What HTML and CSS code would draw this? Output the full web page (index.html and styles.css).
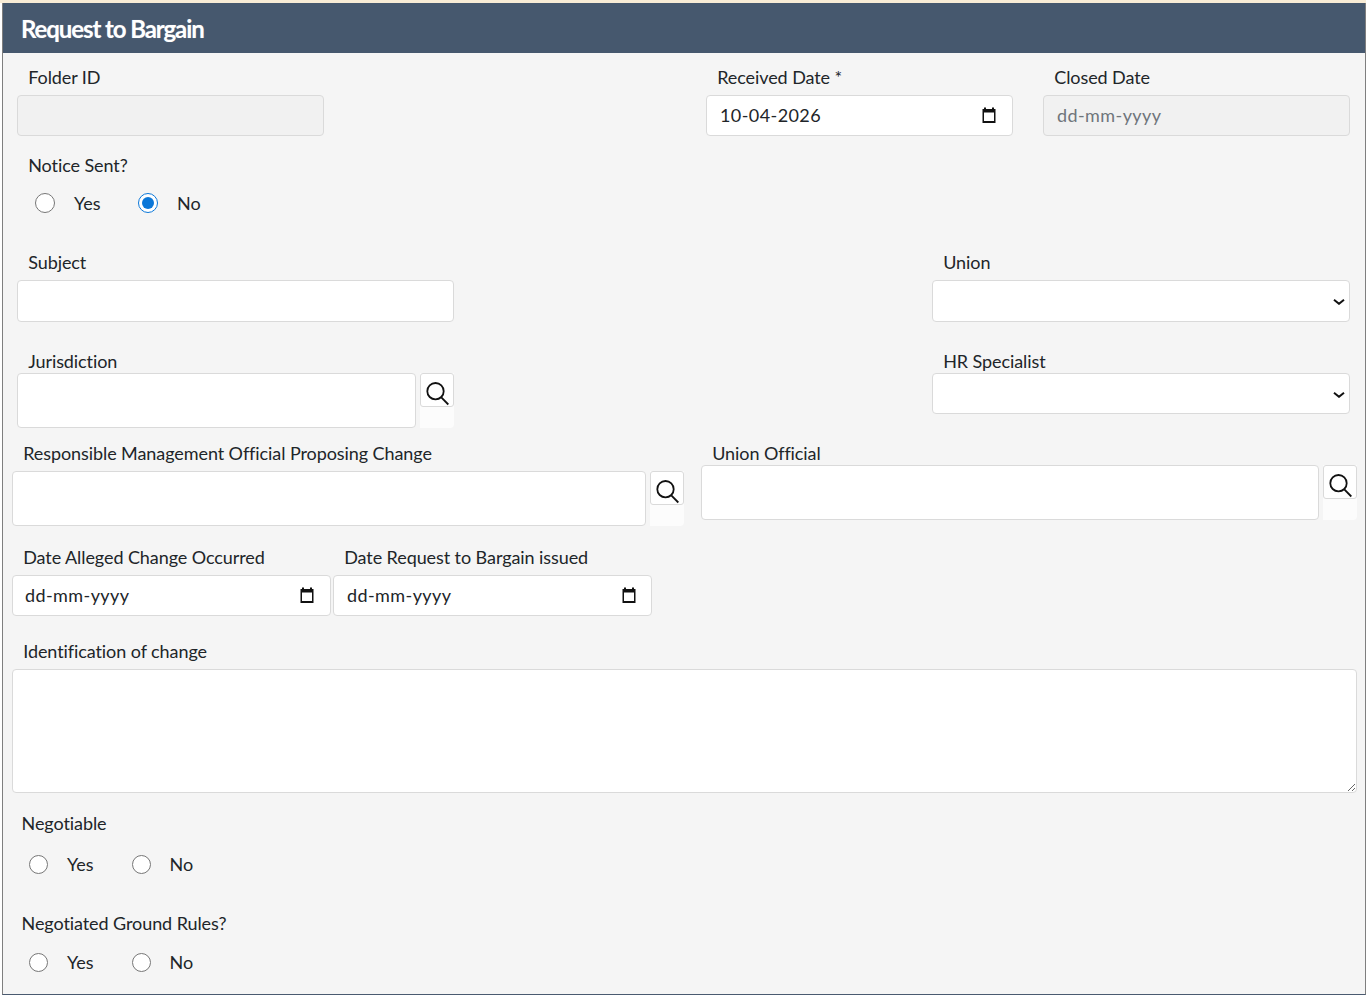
FILE: index.html
```html
<!DOCTYPE html>
<html lang="en">
<head>
<meta charset="utf-8">
<title>Request to Bargain</title>
<link rel="stylesheet" href="styles.css">
</head>
<body>
<div class="strip"></div>
<main class="panel">
  <h1 class="panel-title">Request to Bargain</h1>
  <div class="panel-body">

    <div class="row row-1">
      <div class="field w-307 ml-17">
        <label class="label">Folder ID</label>
        <div class="control disabled"></div>
      </div>
      <div class="field w-307 ml-382">
        <label class="label">Received Date *</label>
        <div class="control date"><span>10-04-2026</span>
          <svg class="cal" viewBox="0 0 16 16"><path d="M3 0.5h2v1.5h6V0.500h2V2h1.500v14h-13V2H3zM3 5.500v8.500h10V5.500z"/></svg>
        </div>
      </div>
      <div class="field w-307 ml-30">
        <label class="label">Closed Date</label>
        <div class="control disabled date muted"><span>dd-mm-yyyy</span></div>
      </div>
    </div>

    <div class="row row-2">
      <div class="field ml-17">
        <label class="label">Notice Sent?</label>
        <div class="radios first-radios">
          <label class="radio"><input type="radio" name="notice"><span>Yes</span></label>
          <label class="radio"><input type="radio" name="notice" checked><span>No</span></label>
        </div>
      </div>
    </div>

    <div class="row row-3">
      <div class="field w-437 ml-17">
        <label class="label">Subject</label>
        <input class="control tall" type="text">
      </div>
      <div class="field w-418 ml-478">
        <label class="label">Union</label>
        <div class="select-wrap">
          <select class="control tall select"><option></option></select>
          <svg class="chevron" viewBox="0 0 12 6"><path d="M1 0.800l5 4 5-4"/></svg>
        </div>
      </div>
    </div>

    <div class="row row-4">
      <div class="field w-437 ml-17">
        <label class="label tight">Jurisdiction</label>
        <div class="lookup">
          <input class="control lookup-input" type="text">
          <div class="lookup-side"><button class="search" type="button"><svg viewBox="0 0 23 23"><circle cx="9.500" cy="9.200" r="8.200"/><path d="M15.300 15.300l7 7.200"/></svg></button></div>
        </div>
      </div>
      <div class="field w-418 ml-478">
        <label class="label tight">HR Specialist</label>
        <div class="select-wrap">
          <select class="control select"><option></option></select>
          <svg class="chevron" viewBox="0 0 12 6"><path d="M1 0.800l5 4 5-4"/></svg>
        </div>
      </div>
    </div>

    <div class="row row-5">
      <div class="field w-672 ml-12">
        <label class="label">Responsible Management Official Proposing Change</label>
        <div class="lookup">
          <input class="control lookup-input" type="text">
          <div class="lookup-side"><button class="search" type="button"><svg viewBox="0 0 23 23"><circle cx="9.500" cy="9.200" r="8.200"/><path d="M15.300 15.300l7 7.200"/></svg></button></div>
        </div>
      </div>
      <div class="field w-656 ml-17">
        <label class="label tight">Union Official</label>
        <div class="lookup">
          <input class="control lookup-input" type="text">
          <div class="lookup-side"><button class="search" type="button"><svg viewBox="0 0 23 23"><circle cx="9.500" cy="9.200" r="8.200"/><path d="M15.300 15.300l7 7.200"/></svg></button></div>
        </div>
      </div>
    </div>

    <div class="row row-6">
      <div class="field w-319 ml-12">
        <label class="label">Date Alleged Change Occurred</label>
        <div class="control date small-pad"><span>dd-mm-yyyy</span>
          <svg class="cal" viewBox="0 0 16 16"><path d="M3 0.5h2v1.5h6V0.500h2V2h1.500v14h-13V2H3zM3 5.500v8.500h10V5.500z"/></svg>
        </div>
      </div>
      <div class="field w-319 ml-2">
        <label class="label">Date Request to Bargain issued</label>
        <div class="control date date-shifted"><span>dd-mm-yyyy</span>
          <svg class="cal" viewBox="0 0 16 16"><path d="M3 0.5h2v1.5h6V0.500h2V2h1.500v14h-13V2H3zM3 5.500v8.500h10V5.500z"/></svg>
        </div>
      </div>
    </div>

    <div class="row row-7">
      <div class="field w-1345 ml-12">
        <label class="label">Identification of change</label>
        <textarea class="control area"></textarea>
      </div>
    </div>

    <div class="row row-8">
      <div class="field ml-22">
        <label class="label">Negotiable</label>
        <div class="radios low-radios">
          <label class="radio"><input type="radio" name="negotiable"><span>Yes</span></label>
          <label class="radio"><input type="radio" name="negotiable"><span>No</span></label>
        </div>
      </div>
    </div>

    <div class="row row-9">
      <div class="field ml-22">
        <label class="label">Negotiated Ground Rules?</label>
        <div class="radios last-radios">
          <label class="radio"><input type="radio" name="rules"><span>Yes</span></label>
          <label class="radio"><input type="radio" name="rules"><span>No</span></label>
        </div>
      </div>
    </div>

  </div>
</main>
</body>
</html>
```
FILE: styles.css
```css
* { box-sizing: border-box; }
html, body { margin: 0; padding: 0; background: #fff; }
body { font-family: Lato, "Liberation Sans", sans-serif; font-size: 18px; color: #212529; }

.strip { width: 1366px; height: 3px; background: #f8ecd6; }
.panel {
  margin-left: 2px;
  width: 1364px;
  height: 992px;
  border-left: 1px solid #7f7f7f;
  border-right: 1px solid #7f7f7f;
  border-bottom: 1px solid #4a5a70;
  background: #f5f5f5;
  display: flex;
  flex-direction: column;
}
.panel-title {
  margin: 0;
  height: 50px;
  padding: 1px 0 0 18px;
  background: #46586e;
  color: #fff;
  font-size: 24px;
  line-height: 50px;
  font-weight: 700;
  letter-spacing: -1.09px;
  text-shadow: 0 0 1px rgba(255, 255, 255, 0.35);
}
.panel-body { flex: 1; margin-left: -3px; }

.row { display: flex; align-items: flex-start; }
.row-1 { margin-top: 13px; }
.row-2 { margin-top: 18px; }
.row-3 { margin-top: 38px; }
.row-4 { margin-top: 28px; }
.row-5 { margin-top: 14px; }
.row-6 { margin-top: 20px; }
.row-7 { margin-top: 24px; }
.row-8 { margin-top: 19px; }
.row-9 { margin-top: 38px; }

.w-307 { width: 307px; }
.w-437 { width: 437px; }
.w-418 { width: 418px; }
.w-672 { width: 672px; }
.w-656 { width: 656px; }
.w-319 { width: 319px; }
.w-1345 { width: 1345px; }
.ml-2 { margin-left: 2px; }
.ml-12 { margin-left: 12px; }
.ml-17 { margin-left: 17px; }
.ml-22 { margin-left: 22px; }
.ml-30 { margin-left: 30px; }
.ml-382 { margin-left: 382px; }
.ml-478 { margin-left: 478px; }

.label {
  display: block;
  height: 22px;
  line-height: 22px;
  margin-bottom: 7px;
  padding-left: 11.2px;
  letter-spacing: -0.08px;
  white-space: nowrap;
}
.label.tight { margin-bottom: 1px; }
.ml-22 > .label { padding-left: 0; margin-left: -0.5px; }

.control {
  display: block;
  width: 100%;
  height: 41px;
  padding: 0 13px;
  border: 1px solid #dadada;
  border-radius: 4px;
  background: #fff;
  font: inherit;
  color: inherit;
}
.control.tall { height: 42px; }
.control.disabled { background: #f1f1f1; }
.date {
  display: flex;
  align-items: center;
  justify-content: space-between;
  padding-bottom: 2px;
  letter-spacing: 0.42px;
}
.muted { color: #6f757b; }
.small-pad { padding-left: 12px; }
.cal { width: 16px; height: 16px; fill: #111; margin-right: 2px; flex: none; }
.date-shifted .cal { margin-right: 1px; }

.select-wrap { position: relative; }
.select { appearance: none; padding-left: 8px; }
.chevron {
  position: absolute;
  top: 50%;
  right: 5px;
  width: 12px;
  height: 6px;
  margin-top: -2px;
  fill: none;
  stroke: #111;
  stroke-width: 2;
}
.area { height: 124px; resize: both; }

.lookup { display: flex; width: 100%; }
.lookup-input { flex: 1; width: auto; height: 55px; min-width: 0; }
.lookup-side {
  width: 34px;
  height: 55px;
  margin-left: 4px;
  background: #fcfcfc;
  border-radius: 0 0 4px 0;
}
.search {
  display: block;
  width: 34px;
  height: 34px;
  padding: 0 0 0 5px;
  border: 1px solid #dadada;
  border-radius: 3px;
  background: #fff;
  overflow: visible;
}
.search svg {
  display: block;
  width: 23px;
  height: 23px;
  margin-top: 6px;
  fill: none;
  stroke: #111;
  stroke-width: 1.8;
  overflow: visible;
}

.radios { display: flex; padding-left: 7px; accent-color: #0b77d8; }
.first-radios { margin-top: 17px; padding-left: 18px; }
.low-radios { margin-top: 20px; }
.last-radios { margin-top: 18px; }
.radio { display: flex; align-items: center; height: 20px; }
.radio + .radio { margin-left: 38px; }
.first-radios .radio + .radio { margin-left: 37.5px; }
.radio input { width: 19px; height: 19px; margin: 0 19px 0 0; }
.first-radios .radio input { width: 20px; height: 20px; }
```
